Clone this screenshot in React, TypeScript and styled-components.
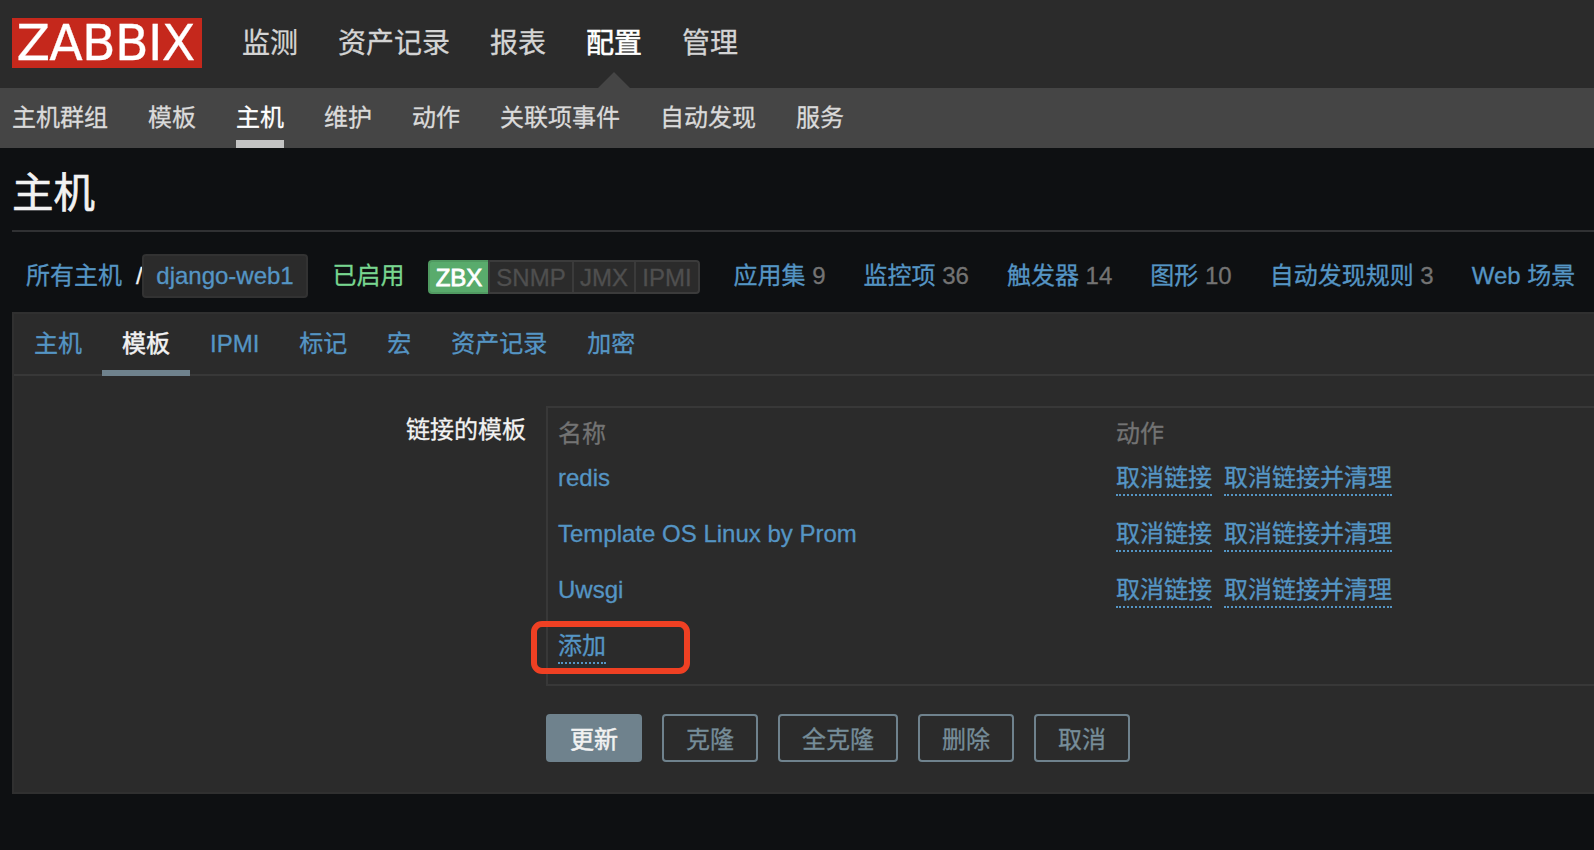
import React from "react";
import styled, { createGlobalStyle, css } from "styled-components";

const color = {
  page: "#0e1012",
  panel: "#2b2b2b",
  line: "#383838",
  subnav: "#454545",
  link: "#5595c4",
  text: "#f2f2f2",
  muted: "#737373",
  button: "#6f828d",
  green: "#59ab6c",
};

const Global = createGlobalStyle`
  * { box-sizing: border-box; }
  body {
    margin: 0;
    background: ${color.page};
    color: ${color.text};
    font: 24px/32px "Liberation Sans", "Noto Sans CJK SC", sans-serif;
    -webkit-text-stroke: 0.3px;
    overflow: hidden;
  }
  a { color: ${color.link}; text-decoration: none; }
  h1, nav, ul { margin: 0; padding: 0; }
`;

const Page = styled.div`
  height: 850px;
  overflow: hidden;
  white-space: nowrap;
`;

const Header = styled.header`
  display: flex;
  align-items: flex-start;
  height: 88px;
  padding: 18px 12px 0;
  background: ${color.panel};
`;

const Logo = styled.div`
  width: 190px;
  height: 50px;
  padding-right: 3px;
  background: #c5281c;
  color: #fff;
  font: 49px/52px "DejaVu Sans", sans-serif;
  letter-spacing: -0.7px;
  text-align: center;
`;

const MainNav = styled.nav`
  display: flex;
  gap: 40px;
  height: 70px;
  margin-left: 40px;
  font-size: 28px;
  line-height: 52px;
`;

const MainItem = styled.a<{ $active?: boolean }>`
  position: relative;
  color: ${(p) => (p.$active ? "#fff" : "#d4d4d4")};
  -webkit-text-stroke-width: ${(p) => (p.$active ? "0.6px" : "0.3px")};
  ${(p) =>
    p.$active &&
    css`
      &::after {
        content: "";
        position: absolute;
        left: 50%;
        bottom: 0;
        margin-left: -16px;
        border: solid transparent;
        border-width: 0 16px 16px;
        border-bottom-color: ${color.subnav};
      }
    `}
`;

const SubNav = styled.nav`
  display: flex;
  gap: 40px;
  height: 60px;
  padding: 0 12px;
  background: ${color.subnav};
  line-height: 60px;
`;

const SubItem = styled.a<{ $active?: boolean }>`
  height: 60px;
  color: ${(p) => (p.$active ? "#fff" : "#dadada")};
  box-shadow: ${(p) => (p.$active ? "inset 0 -8px #c4c4c4" : "none")};
`;

const Title = styled.h1`
  height: 84px;
  margin-left: 12px;
  border-bottom: 2px solid #303133;
  font-size: 41.5px;
  font-weight: 400;
  line-height: 91px;
  -webkit-text-stroke-width: 0.6px;
`;

const HostBar = styled.div`
  display: flex;
  align-items: center;
  height: 80px;
  padding: 8px 0 0 26px;
  line-height: 44px;
`;

const Slash = styled.span`
  width: 6px;
  margin-left: 14px;
`;

const HostName = styled.a`
  width: 166px;
  height: 44px;
  border: 2px solid #323232;
  border-radius: 4px;
  background: ${color.panel};
  line-height: 40px;
  text-align: center;
`;

const Enabled = styled.span`
  margin-left: 24.5px;
  color: #78d68f;
`;

const Badges = styled.div`
  display: flex;
  margin: 2px 33.5px 0 23.5px;
  height: 34px;
`;

const Badge = styled.span<{ $w: number; $on?: boolean }>`
  width: ${(p) => p.$w}px;
  border: 2px solid ${(p) => (p.$on ? "#509a61" : "#3b3b3b")};
  border-right-width: 0;
  background: ${(p) => (p.$on ? color.green : color.panel)};
  color: ${(p) => (p.$on ? "#fff" : "#4f4f4f")};
  -webkit-text-stroke-width: ${(p) => (p.$on ? "0.8px" : "0.3px")};
  line-height: 32px;
  text-align: center;
  &:first-child { border-radius: 4px 0 0 4px; }
  &:last-child { border-right-width: 2px; border-radius: 0 4px 4px 0; }
`;

const Counters = styled.div`
  display: flex;
  gap: 38px;
`;

const Count = styled.span`
  color: ${color.muted};
`;

const Panel = styled.main`
  height: 482px;
  margin-left: 12px;
  border: 2px solid #303030;
  border-right: 0;
  background: ${color.panel};
`;

const Tabs = styled.nav`
  display: flex;
  height: 62px;
  border-bottom: 2px solid ${color.line};
  line-height: 60px;
`;

const Tab = styled.a<{ $active?: boolean }>`
  height: 62px;
  padding: 0 20px;
  color: ${(p) => (p.$active ? color.text : color.link)};
  -webkit-text-stroke-width: ${(p) => (p.$active ? "0.5px" : "0.3px")};
  box-shadow: ${(p) => (p.$active ? `inset 0 -6px ${color.button}` : "none")};
`;

const FormRow = styled.div`
  display: flex;
  margin-top: 30px;
`;

const Label = styled.div`
  width: 512px;
  padding-top: 8px;
  text-align: right;
`;

const TableBox = styled.div`
  position: relative;
  flex: 1;
  height: 280px;
  margin-left: 20px;
  padding: 10px 0 0 10px;
  border: 2px solid ${color.line};
  border-right: 0;
`;

const Row = styled.div`
  display: grid;
  grid-template-columns: 558px 1fr;
  height: 56px;
`;

const HeadRow = styled(Row)`
  height: 44px;
  color: ${color.muted};
`;

const Actions = styled.div`
  display: flex;
  align-items: flex-start;
  gap: 12px;
`;

const Action = styled.a`
  justify-self: start;
  height: 34px;
  border-bottom: 2px dotted ${color.link};
`;

const Highlight = styled.div`
  position: absolute;
  left: -17px;
  top: 213px;
  width: 159px;
  height: 53px;
  border: 6px solid #ef4023;
  border-radius: 11px;
`;

const Buttons = styled.div`
  display: flex;
  gap: 20px;
  margin: 28px 0 0 532px;
`;

const Button = styled.button<{ $primary?: boolean }>`
  height: 48px;
  padding: 2px 22px 0;
  border: 2px solid ${color.button};
  border-radius: 4px;
  background: ${(p) => (p.$primary ? color.button : "transparent")};
  color: ${(p) => (p.$primary ? color.text : "#768d99")};
  font: inherit;
  line-height: 44px;
  -webkit-text-stroke-width: ${(p) => (p.$primary ? "0.5px" : "0.3px")};
`;

const mainItems = ["监测", "资产记录", "报表", "配置", "管理"];
const subItems = ["主机群组", "模板", "主机", "维护", "动作", "关联项事件", "自动发现", "服务"];
const counters: [string, string][] = [
  ["应用集", "9"],
  ["监控项", "36"],
  ["触发器", "14"],
  ["图形", "10"],
  ["自动发现规则", "3"],
  ["Web 场景", ""],
];
const tabs = ["主机", "模板", "IPMI", "标记", "宏", "资产记录", "加密"];
const templates = ["redis", "Template OS Linux by Prom", "Uwsgi"];
const buttons = ["更新", "克隆", "全克隆", "删除", "取消"];

export default function App() {
  return (
    <Page>
      <Global />
      <Header>
        <Logo>ZABBIX</Logo>
        <MainNav>
          {mainItems.map((t) => (
            <MainItem key={t} $active={t === "配置"}>{t}</MainItem>
          ))}
        </MainNav>
      </Header>
      <SubNav>
        {subItems.map((t) => (
          <SubItem key={t} $active={t === "主机"}>{t}</SubItem>
        ))}
      </SubNav>
      <Title>主机</Title>
      <HostBar>
        <a>所有主机</a>
        <Slash>/</Slash>
        <HostName>django-web1</HostName>
        <Enabled>已启用</Enabled>
        <Badges>
          <Badge $w={60} $on>ZBX</Badge>
          <Badge $w={84}>SNMP</Badge>
          <Badge $w={62}>JMX</Badge>
          <Badge $w={66}>IPMI</Badge>
        </Badges>
        <Counters>
          {counters.map(([name, n]) => (
            <span key={name}>
              <a>{name}</a>
              {n && <Count> {n}</Count>}
            </span>
          ))}
        </Counters>
      </HostBar>
      <Panel>
        <Tabs>
          {tabs.map((t) => (
            <Tab key={t} $active={t === "模板"}>{t}</Tab>
          ))}
        </Tabs>
        <FormRow>
          <Label>链接的模板</Label>
          <TableBox>
            <HeadRow>
              <span>名称</span>
              <span>动作</span>
            </HeadRow>
            {templates.map((t) => (
              <Row key={t}>
                <a>{t}</a>
                <Actions>
                  <Action>取消链接</Action>
                  <Action>取消链接并清理</Action>
                </Actions>
              </Row>
            ))}
            <Row>
              <Action>添加</Action>
            </Row>
            <Highlight />
          </TableBox>
        </FormRow>
        <Buttons>
          {buttons.map((t) => (
            <Button key={t} $primary={t === "更新"}>{t}</Button>
          ))}
        </Buttons>
      </Panel>
    </Page>
  );
}
